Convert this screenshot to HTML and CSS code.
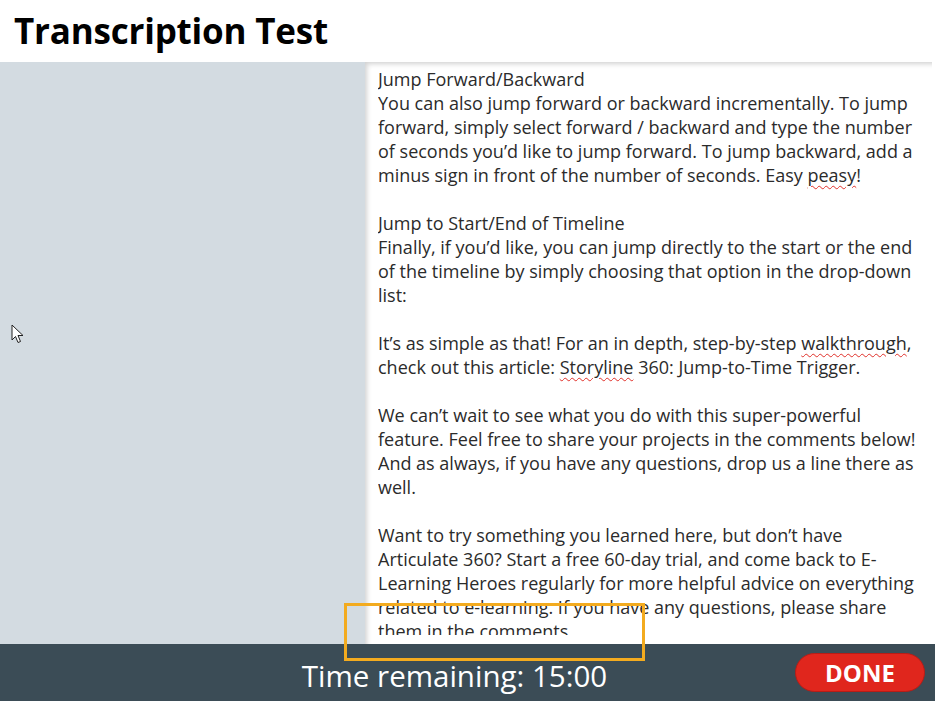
FILE: index.html
```html
<!DOCTYPE html>
<html lang="en">
<head>
  <meta charset="UTF-8" />
  <title>Transcription Test</title>
  <link rel="stylesheet" href="styles.css">
</head>
<body>
  <div class="slide">
    <div class="header">
      <div class="title">Transcription Test</div>
    </div>

    <div class="stage">
      <div class="media-pane">
        <svg class="pointer" width="14" height="20" viewBox="0 0 14 20">
          <path d="M1 1 L1 16 L4.5 12.5 L7 18.5 L9.5 17.5 L7 11.5 L12 11.5 Z" fill="#fff" stroke="#222" stroke-width="1" stroke-linejoin="round"/>
        </svg>
      </div>

      <div class="transcript">
        <div class="transcript-body">
          <p>Jump Forward/Backward<br>
          You can also jump forward or backward incrementally. To jump forward, simply select forward / backward and type the number of seconds you’d like to jump forward. To jump backward, add a minus sign in front of the number of seconds. Easy <span class="typo">peasy</span>!</p>

          <p>Jump to Start/End of Timeline<br>
          Finally, if you’d like, you can jump directly to the start or the end of the timeline by simply choosing that option in the drop-down list:</p>

          <p>It’s as simple as that! For an in depth, step-by-step <span class="typo">walkthrough</span>, check out this article: <span class="typo">Storyline</span> 360: Jump-to-Time Trigger.</p>

          <p>We can’t wait to see what you do with this super-powerful feature. Feel free to share your projects in the comments below! And as always, if you have any questions, drop us a line there as well.</p>

          <p>Want to try something you learned here, but don’t have Articulate 360? Start a free 60-day trial, and come back to E-Learning Heroes regularly for more helpful advice on everything related to e-learning. If you have any questions, please share them in the comments.</p>
        </div>
      </div>
    </div>

    <div class="footer">
      <div class="timer">Time remaining: 15:00</div>
      <button class="done-btn">DONE</button>
    </div>

    <div class="highlight"></div>
  </div>
</body>
</html>
```

FILE: styles.css
```css
body {
  margin: 0;
  font-family: "Open Sans", sans-serif;
  background: #ffffff;
  overflow: hidden;
}

.slide {
  position: relative;
  width: 935px;
  height: 701px;
  display: flex;
  flex-direction: column;
}

.header {
  height: 62px;
  flex: none;
  padding-left: 14px;
  box-sizing: border-box;
}

.title {
  font-size: 35px;
  font-weight: 700;
  color: #000;
  line-height: 62px;
  letter-spacing: -0.2px;
}

.stage {
  flex: 1;
  display: flex;
  min-height: 0;
}

.media-pane {
  width: 365px;
  flex: none;
  background: #d3dbe1;
  position: relative;
}

.pointer {
  position: absolute;
  left: 11px;
  top: 262px;
}

/* text panel, clipped a little above the footer */
.transcript {
  flex: 1;
  margin-right: 3px;
  background: #fff;
  padding: 5px 10px 9px 13px;
  display: flex;
  flex-direction: column;
  box-shadow: inset 4px 4px 5px -2px rgba(0, 0, 0, 0.18);
  font-size: 18px;
  line-height: 24px;
  color: #2b2b2b;
}

.transcript-body {
  flex: 1;
  min-height: 0;
  overflow: hidden;
}

.transcript p {
  margin: 0 0 24px 0;
}

.typo {
  text-decoration: underline wavy #e0302a;
  text-decoration-thickness: 1px;
  text-underline-offset: 3px;
}

.footer {
  height: 57px;
  flex: none;
  background: #3b4c56;
  display: flex;
  align-items: center;
  justify-content: center;
  padding-right: 26px;
  position: relative;
}

.timer {
  color: #fff;
  font-size: 29.5px;
  margin-top: 6px;
}

.done-btn {
  position: absolute;
  right: 10px;
  top: 9px;
  width: 130px;
  height: 39px;
  border-radius: 20px;
  border: 1px solid #b81c16;
  background: #e0261d;
  color: #fff;
  font-family: "Open Sans", sans-serif;
  font-weight: 700;
  font-size: 24px;
  padding: 0;
}

.highlight {
  position: absolute;
  left: 344px;
  top: 603px;
  width: 301px;
  height: 58px;
  border: 3px solid #f3ab1f;
  box-sizing: border-box;
}
```
